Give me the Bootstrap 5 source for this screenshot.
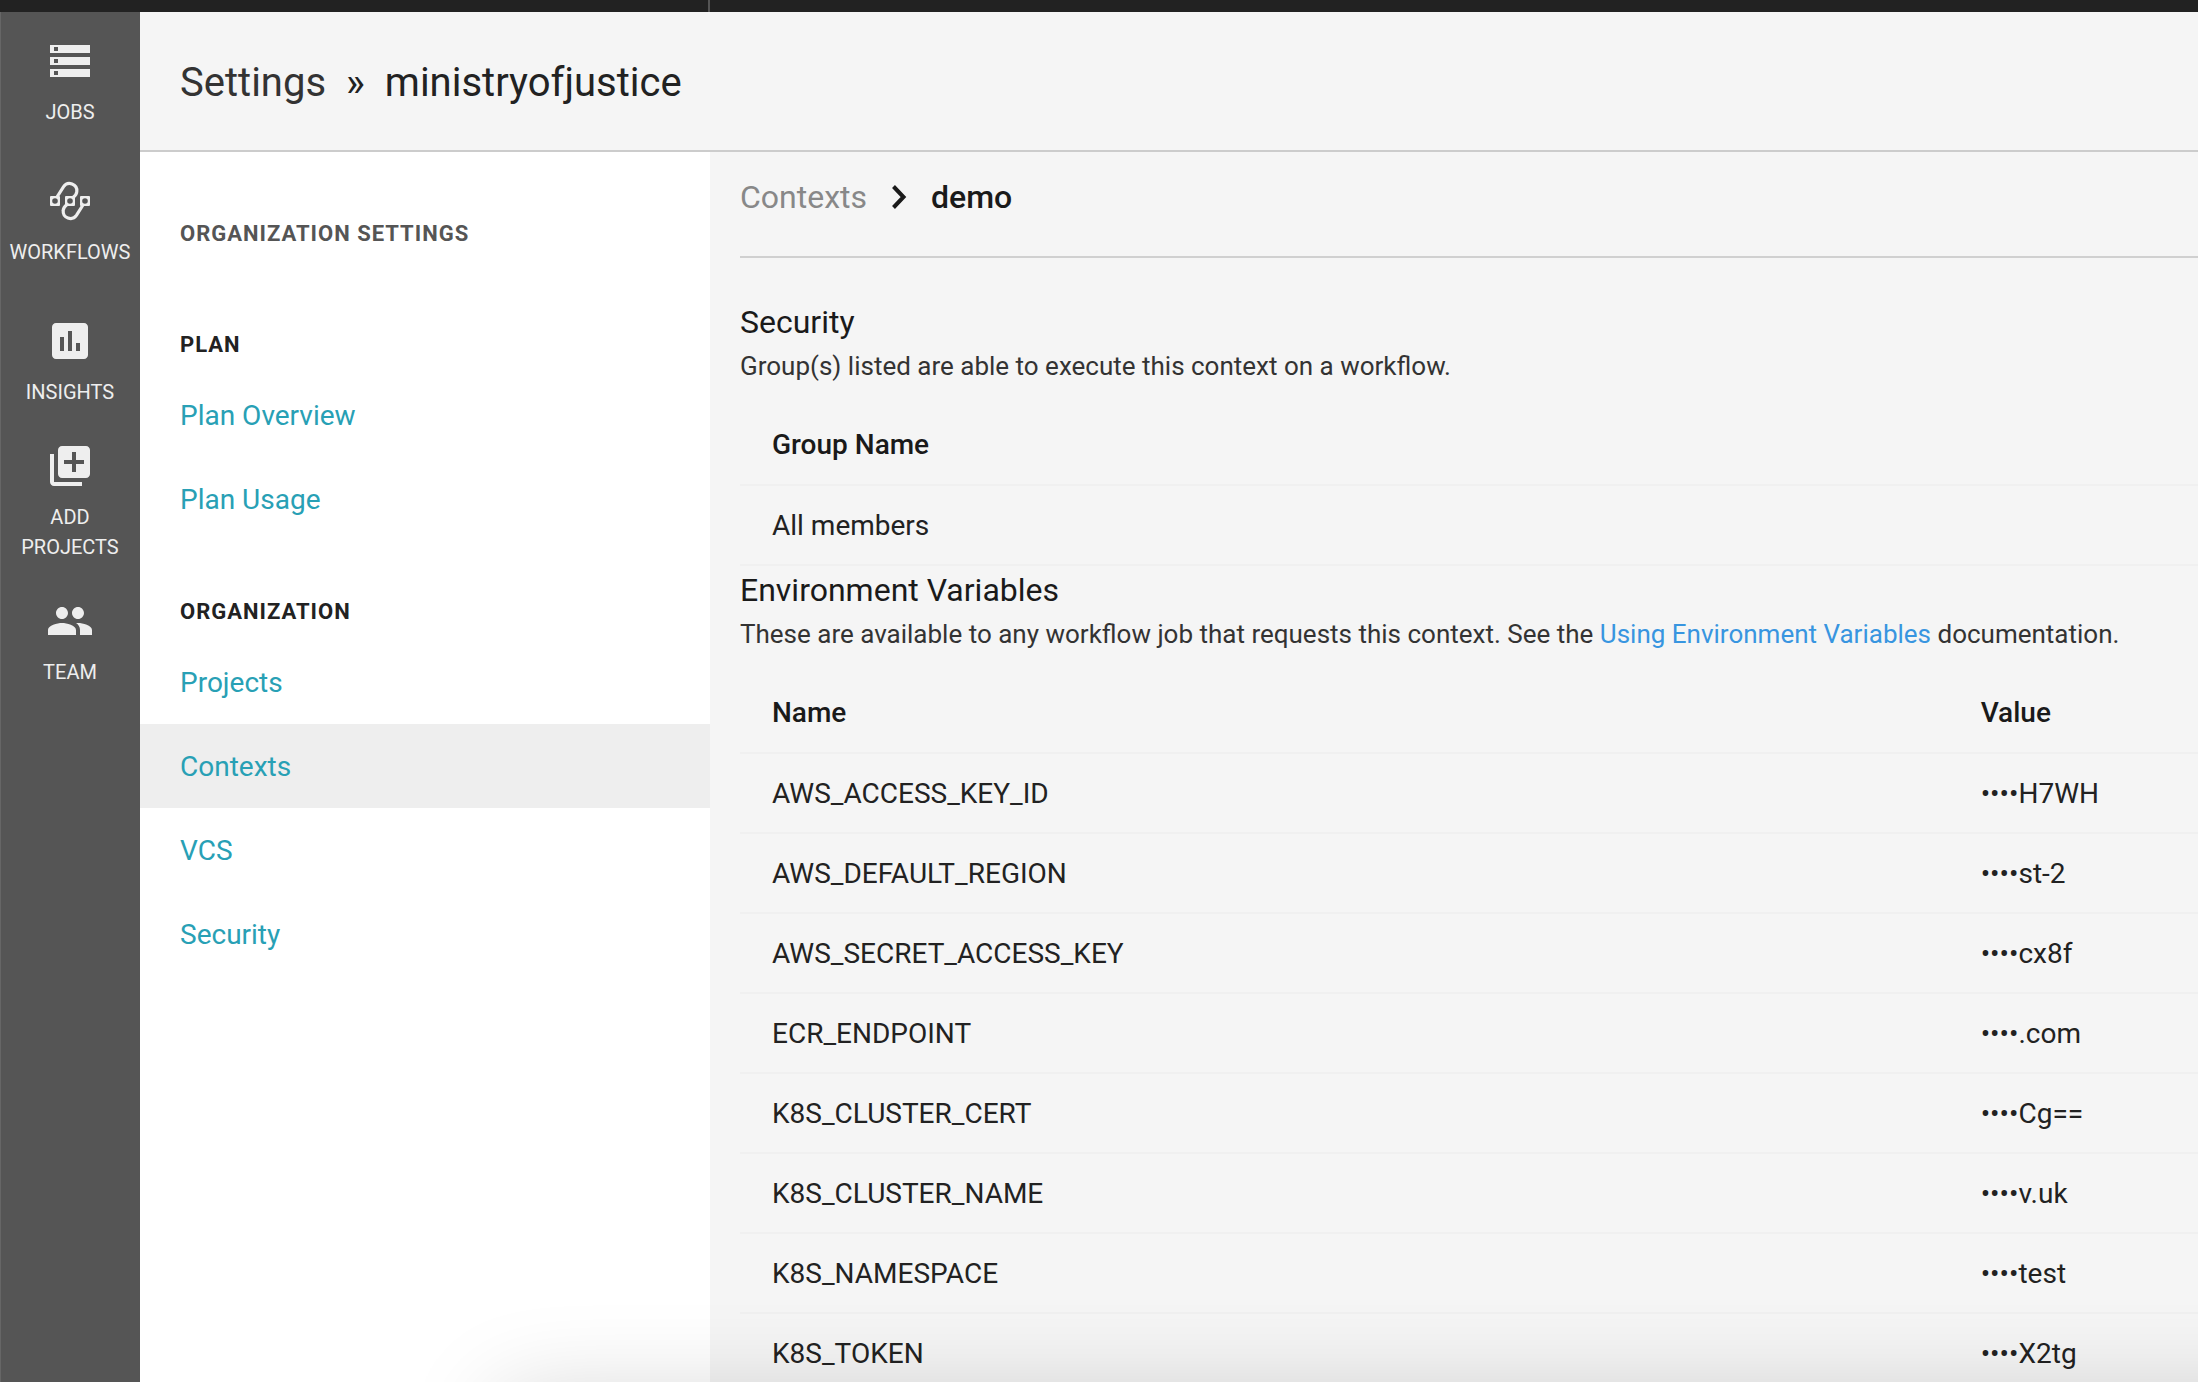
<!DOCTYPE html>
<html lang="en">
<head>
<meta charset="utf-8">
<meta name="viewport" content="width=device-width, initial-scale=1">
<title>Settings » ministryofjustice</title>
<link href="https://cdn.jsdelivr.net/npm/bootstrap@5.3.0/dist/css/bootstrap.min.css" rel="stylesheet">
<style>
  body { font-family: Roboto, "Liberation Sans", sans-serif; font-size: 28px; color: #222; background: #f5f5f5; }
  a { text-decoration: none; }
  .topbar { height: 12px; background: #222; }
  .topbar-org { width: 710px; border-right: 2px solid #555; }
  .pane { min-height: 0; }
  .rail { width: 140px; background: #555; box-shadow: inset 1px 0 #666; }
  .rail-item { height: 140px; gap: 12px; font-size: 20px; line-height: 30px; color: #eee; text-align: center; }
  .rail-item svg { width: 48px; height: 48px; fill: #eee; }
  .page-head { height: 140px; padding: 4px 40px 0; border-bottom: 2px solid #ccc; gap: 20px; }
  .page-head h1, .page-head span { font-size: 40px; line-height: 48px; font-weight: 400; }
  .page-head a { color: #333; }
  .side { width: 570px; padding-top: 67px; background: #fff; }
  .side h2, .side h3 { padding: 0 40px; margin: 0; font-size: 22px; line-height: 30px; font-weight: 700; letter-spacing: 1px; text-transform: uppercase; }
  .side h2 { color: #555; padding-bottom: 25px; }
  .side h3 { padding-top: 56px; padding-bottom: 13px; }
  .side .nav-link { padding: 22px 40px 20px; line-height: 42px; color: #28a0b5; }
  .side .nav-link.active { background: #eee; }
  .detail { padding-left: 30px; overflow-y: auto; scrollbar-width: none; }
  .detail::-webkit-scrollbar { display: none; }
  .crumbs { padding: 25px 0 39px; font-size: 32px; line-height: 40px; border-bottom: 2px solid #d0d0d0; gap: 24px; }
  .crumbs a { color: #888; }
  .crumbs strong { font-weight: 500; color: #1a1a1a; }
  .crumbs svg { width: 16px; height: 26px; }
  .detail section { padding-top: 2px; }
  .crumbs + section { padding-top: 42px; }
  .detail h2 { margin: 0; font-size: 32px; line-height: 44px; font-weight: 400; color: #1a1a1a; }
  .detail p { margin: 0 0 18px; font-size: 26px; line-height: 44px; color: #333; }
  .detail p a { color: #3895e0; }
  .vars { --bs-table-bg: transparent; --bs-table-color: #222; margin: 0; table-layout: fixed; }
  .vars > :not(caption) > * > * { padding: 18px 32px; line-height: 42px; border-bottom: 2px solid #f0f0f0; }
  .vars > tbody > tr > td { padding: 19px 32px 17px; }
  .vars th { font-weight: 500; color: #1a1a1a; }
  .name-col { width: 82.9%; }
  .dock-shadow { position: fixed; left: 500px; right: -200px; top: calc(100vh + 16px); height: 200px; box-shadow: 0 0 96px rgba(0, 0, 0, .18); pointer-events: none; }
</style>
</head>
<body>
<div class="vh-100 d-flex flex-column overflow-hidden">
  <div class="topbar flex-shrink-0"><div class="topbar-org h-100"></div></div>
  <div class="pane d-flex flex-grow-1">
    <nav class="rail flex-shrink-0" aria-label="Main">
      <a class="rail-item d-flex flex-column align-items-center justify-content-center" href="#">
        <svg viewBox="0 0 24 24"><path d="M2 20h20v-4H2v4zm2-3h2v2H4v-2zM2 4v4h20V4H2zm4 3H4V5h2v2zm-4 7h20v-4H2v4zm2-3h2v2H4v-2z"/></svg>
        <span>JOBS</span>
      </a>
      <a class="rail-item d-flex flex-column align-items-center justify-content-center" href="#">
        <svg viewBox="0 0 48 48">
          <g fill="none" stroke="#eee" stroke-width="3.2"><path d="M11 20 17.6 9.6A7.3 7.3 0 0 1 30.8 14.5Q30.8 17.500 27 20.500"/><path d="M37 28 30.400 38.400A7.300 7.300 0 0 1 17.200 33.500Q17.200 30.500 21 27.500"/></g>
          <path fill-rule="evenodd" d="M5 19h8a1 1 0 0 1 1 1v8a1 1 0 0 1-1 1H5a1 1 0 0 1-1-1v-8a1 1 0 0 1 1-1zm4 2.200a2.800 2.800 0 1 0 0 5.600 2.800 2.800 0 0 0 0-5.600z"/>
          <path fill-rule="evenodd" d="M20 19h8a1 1 0 0 1 1 1v8a1 1 0 0 1-1 1h-8a1 1 0 0 1-1-1v-8a1 1 0 0 1 1-1zm4 2.200a2.800 2.800 0 1 0 0 5.600 2.800 2.800 0 0 0 0-5.600z"/>
          <path fill-rule="evenodd" d="M35 19h8a1 1 0 0 1 1 1v8a1 1 0 0 1-1 1h-8a1 1 0 0 1-1-1v-8a1 1 0 0 1 1-1zm4 2.200a2.800 2.800 0 1 0 0 5.600 2.800 2.800 0 0 0 0-5.600z"/>
        </svg>
        <span>WORKFLOWS</span>
      </a>
      <a class="rail-item d-flex flex-column align-items-center justify-content-center" href="#">
        <svg viewBox="0 0 24 24"><path d="M19 3H5c-1.100 0-2 .9-2 2v14c0 1.100.9 2 2 2h14c1.100 0 2-.9 2-2V5c0-1.100-.9-2-2-2zM9 17H7v-7h2v7zm4 0h-2V7h2v10zm4 0h-2v-4h2v4z"/></svg>
        <span>INSIGHTS</span>
      </a>
      <a class="rail-item d-flex flex-column align-items-center justify-content-center" href="#">
        <svg viewBox="0 0 24 24"><path d="M4 6H2v14c0 1.100.9 2 2 2h14v-2H4V6zm16-4H8c-1.100 0-2 .9-2 2v12c0 1.100.9 2 2 2h12c1.100 0 2-.9 2-2V4c0-1.100-.9-2-2-2zm-1 9h-4v4h-2v-4H9V9h4V5h2v4h4v2z"/></svg>
        <span>ADD<br>PROJECTS</span>
      </a>
      <a class="rail-item d-flex flex-column align-items-center justify-content-center" href="#">
        <svg viewBox="0 0 24 24"><path d="M16 11c1.660 0 2.990-1.340 2.990-3S17.660 5 16 5c-1.660 0-3 1.340-3 3s1.340 3 3 3zm-8 0c1.660 0 2.990-1.340 2.990-3S9.660 5 8 5C6.340 5 5 6.340 5 8s1.340 3 3 3zm0 2c-2.330 0-7 1.170-7 3.500V19h14v-2.500c0-2.330-4.670-3.500-7-3.500zm8 0c-.29 0-.62.020-.97.050 1.160.84 1.970 1.970 1.970 3.450V19h6v-2.500c0-2.330-4.670-3.500-7-3.500z"/></svg>
        <span>TEAM</span>
      </a>
    </nav>

    <div class="pane d-flex flex-column flex-grow-1 overflow-hidden">
      <header class="page-head d-flex align-items-center flex-shrink-0">
        <a href="#"><span>Settings</span></a>
        <span>»</span>
        <h1 class="m-0">ministryofjustice</h1>
      </header>

      <div class="pane d-flex flex-grow-1">
        <aside class="side flex-shrink-0">
          <h2>Organization Settings</h2>
          <h3>Plan</h3>
          <nav class="nav flex-column" aria-label="Plan">
            <a class="nav-link" href="#">Plan Overview</a>
            <a class="nav-link" href="#">Plan Usage</a>
          </nav>
          <h3>Organization</h3>
          <nav class="nav flex-column" aria-label="Organization">
            <a class="nav-link" href="#">Projects</a>
            <a class="nav-link active" aria-current="page" href="#">Contexts</a>
            <a class="nav-link" href="#">VCS</a>
            <a class="nav-link" href="#">Security</a>
          </nav>
        </aside>

        <main class="detail flex-grow-1">
          <div class="crumbs d-flex align-items-center">
            <a href="#">Contexts</a>
            <svg viewBox="0 0 16 26" fill="none" stroke="#1a1a1a" stroke-width="4"><path d="M2.500 2.500 12.500 13 2.500 23.500"/></svg>
            <strong>demo</strong>
          </div>

          <section>
            <h2>Security</h2>
            <p>Group(s) listed are able to execute this context on a workflow.</p>
            <table class="table vars">
              <thead><tr><th scope="col">Group Name</th></tr></thead>
              <tbody><tr><td>All members</td></tr></tbody>
            </table>
          </section>

          <section>
            <h2>Environment Variables</h2>
            <p>These are available to any workflow job that requests this context. See the <a href="#">Using Environment Variables</a> documentation.</p>
            <table class="table vars">
              <thead><tr><th scope="col" class="name-col">Name</th><th scope="col">Value</th></tr></thead>
              <tbody>
                <tr><td>AWS_ACCESS_KEY_ID</td><td>••••H7WH</td></tr>
                <tr><td>AWS_DEFAULT_REGION</td><td>••••st-2</td></tr>
                <tr><td>AWS_SECRET_ACCESS_KEY</td><td>••••cx8f</td></tr>
                <tr><td>ECR_ENDPOINT</td><td>••••.com</td></tr>
                <tr><td>K8S_CLUSTER_CERT</td><td>••••Cg==</td></tr>
                <tr><td>K8S_CLUSTER_NAME</td><td>••••v.uk</td></tr>
                <tr><td>K8S_NAMESPACE</td><td>••••test</td></tr>
                <tr><td>K8S_TOKEN</td><td>••••X2tg</td></tr>
              </tbody>
            </table>
          </section>
        </main>
      </div>
    </div>
  </div>
</div>
<div class="dock-shadow"></div>
<script src="https://cdn.jsdelivr.net/npm/bootstrap@5.3.0/dist/js/bootstrap.bundle.min.js"></script>
</body>
</html>
